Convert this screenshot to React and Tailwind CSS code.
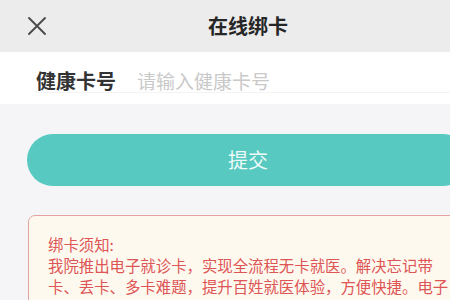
function CloseIcon() {
    return (
        <svg aria-hidden="true" className="h-[20px] w-[20px]" fill="none" viewBox="0 0 20 20">
            <path d="M2 2l16 16M18 2L2 18" stroke="#4a4a4a" strokeWidth="1.9" strokeLinecap="round" />
        </svg>
    );
}

export default function App() {
    return (
        <div className="h-[300px] w-[450px] overflow-hidden bg-[#f5f5f7] font-['Noto_Sans_CJK_SC',sans-serif]">
            <div className="w-[496px]">
                <header className="relative flex h-[52px] items-center justify-center bg-[#ececec]">
                    <button type="button" className="absolute left-[27px] top-[16px]" aria-label="关闭">
                        <CloseIcon />
                    </button>
                    <h1 className="text-[20px] font-bold leading-none text-[#262626]">在线绑卡</h1>
                </header>

                <div className="bg-white pb-[11px] pl-[36px] pt-[17px]">
                    <div className="flex h-[24px] items-center border-b border-[#f3f3f3]">
                        <label className="w-[101px] shrink-0 text-[20px] font-bold leading-none text-[#333]">
                            健康卡号
                        </label>
                        <input
                            className="min-w-0 flex-1 bg-transparent text-[19px] leading-none text-[#333] outline-none placeholder:text-[#c9c9c9]"
                            placeholder="请输入健康卡号"
                        />
                    </div>
                </div>

                <div className="px-[27px] pt-[30px]">
                    <button
                        type="button"
                        className="flex h-[52px] w-full items-center justify-center rounded-full bg-[#57c9c0] text-[20px] leading-none text-[#eefaf8]"
                    >
                        提交
                    </button>
                </div>

                <div className="ml-[28px] mt-[29px] w-[446px] rounded-[7px] border-[1.5px] border-[#e3a3a3] bg-[#fdf9ef] px-[19px] pt-[18px] pb-4 text-[15.4px] leading-[21px] text-[#dd5555]">
                    <p>绑卡须知:</p>
                    <p>我院推出电子就诊卡，实现全流程无卡就医。解决忘记带卡、丢卡、多卡难题，提升百姓就医体验，方便快捷。电子</p>
                </div>
            </div>
        </div>
    );
}
